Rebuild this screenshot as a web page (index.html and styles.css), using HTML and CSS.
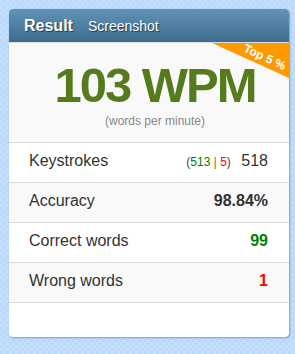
FILE: index.html
```html
<!DOCTYPE html>
<html>
<head>
<meta charset="utf-8">
<link rel="stylesheet" href="styles.css">
</head>
<body>
<div class="card">
  <div class="header">
    <span class="title">Result</span>
    <span class="subtitle">Screenshot</span>
  </div>
  <div class="hero">
    <div class="ribbon"></div>
    <span class="ribbon-text">Top 5 %</span>
    <div class="wpm">103 WPM</div>
    <div class="unit">(words per minute)</div>
  </div>
  <div class="row">
    <span class="label">Keystrokes</span>
    <span class="value"><small class="detail">(<span class="good">513</span> <span class="sep">|</span> <span class="bad">5</span>)</small> 518</span>
  </div>
  <div class="row alt">
    <span class="label">Accuracy</span>
    <span class="value strong">98.84%</span>
  </div>
  <div class="row">
    <span class="label">Correct words</span>
    <span class="value strong good">99</span>
  </div>
  <div class="row alt">
    <span class="label">Wrong words</span>
    <span class="value strong bad">1</span>
  </div>
</div>
</body>
</html>
```

FILE: styles.css
```css
html, body {
  margin: 0;
  padding: 0;
}
body {
  background-color: #bedcfd;
  background-image: repeating-conic-gradient(#b9d9fc 0 25%, #c4e0fd 0 50%);
  background-size: 6px 6px;
  font-family: "Liberation Sans", Arial, sans-serif;
  padding: 9px 6px 0 9px;
  height: 354px;
  box-sizing: border-box;
}
.card {
  width: 280px;
  height: 328px;
  background: #fff;
  border-radius: 4px;
  box-shadow: 1px 1px 2px rgba(30, 80, 160, 0.45);
  overflow: hidden;
}
.header {
  height: 33px;
  display: flex;
  align-items: center;
  padding-left: 15px;
  gap: 15px;
  background: linear-gradient(#6193b8, #3f6c8c);
  color: #fff;
  text-shadow: 1px 1px 1px rgba(0, 0, 0, 0.55);
}
.title {
  font-weight: bold;
  font-size: 16px;
}
.subtitle {
  font-size: 14px;
  padding-top: 1px;
}
.hero {
  position: relative;
  overflow: hidden;
  background: #f9f9f9;
  border-top: 1px solid #dcdcdc;
  border-bottom: 1px solid #dcdcdc;
  height: 99px;
  box-sizing: content-box;
  padding-left: 12px;
  text-align: center;
}
.ribbon {
  position: absolute;
  top: 0;
  right: 0;
  width: 77px;
  height: 35px;
  background: #ff9900;
  clip-path: polygon(0 0, 100% 0, 100% 100%);
}
.ribbon-text {
  position: absolute;
  top: 9px;
  left: 233px;
  white-space: nowrap;
  line-height: 11px;
  color: #fff;
  font-weight: bold;
  font-size: 12px;
  transform: rotate(25deg);
}
.wpm {
  padding-top: 17px;
  font-size: 49px;
  line-height: 50px;
  font-weight: bold;
  letter-spacing: -2px;
  color: #567b1d;
}
.unit {
  margin-top: 4px;
  font-size: 12px;
  line-height: 14px;
  color: #888;
}
.row {
  display: flex;
  justify-content: space-between;
  align-items: baseline;
  box-sizing: border-box;
  height: 40px;
  padding: 0 21px 3px 20px;
  line-height: 36px;
  border-bottom: 1px solid #dcdcdc;
  background: #fff;
  color: #333;
  font-size: 16px;
}
.row.alt {
  background: #f9f9f9;
}
.value.strong {
  font-weight: bold;
}
.detail {
  font-size: 12px;
  color: #444;
  margin-right: 6px;
}
.good {
  color: #008000;
}
.bad {
  color: #ff0000;
}
.sep {
  color: #c06000;
}
```
